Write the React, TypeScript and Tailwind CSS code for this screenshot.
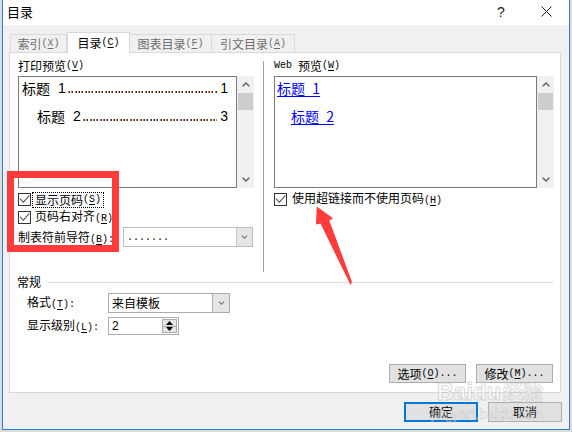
import React from "react";

const Acc = ({ k, tail = "" }: { k: string; tail?: string }) => (
  <span className="font-['Liberation_Mono',monospace] text-[10px]">
    (<span className="underline underline-offset-2">{k}</span>){tail}
  </span>
);

const Check = () => (
  <span className="flex h-[13px] w-[13px] shrink-0 items-center justify-center border border-[#333333] bg-white">
    <svg width="11" height="11" viewBox="0 0 11 11">
      <path d="M1 4.7 L4.3 8.3 L10.3 1.3" fill="none" stroke="#5f5f5f" strokeWidth="1.2" />
    </svg>
  </span>
);

const Chevron = ({ up = false, color = "#606060", w = 8, h = 5 }: { up?: boolean; color?: string; w?: number; h?: number }) => (
  <svg width={w} height={h} viewBox="0 0 8 5">
    <path d={up ? "M0.7 4.3 L4 1 L7.3 4.3" : "M0.7 0.7 L4 4 L7.3 0.7"} fill="none" stroke={color} strokeWidth="1.4" />
  </svg>
);

const ScrollBar = () => (
  <div className="flex w-[17px] flex-col bg-[#f0f0f0]">
    <div className="flex h-[17px] items-center justify-center">
      <Chevron up />
    </div>
    <div className="mx-[1px] h-[17px] bg-[#cdcdcd]" />
    <div className="flex-1" />
    <div className="flex h-[17px] items-center justify-center">
      <Chevron />
    </div>
  </div>
);

const Leader = () => (
  <span className="mb-[3px] ml-[2px] mr-[3px] h-[2px] flex-1 self-end bg-[repeating-linear-gradient(90deg,#c97a2b_0px,#c97a2b_1px,#23306a_1px,#23306a_2px,transparent_2px,transparent_3.33px)]" />
);

const Btn = ({ children, className = "" }: { children: React.ReactNode; className?: string }) => (
  <div className={`flex h-[19px] w-[77px] items-center justify-center border border-[#adadad] bg-[#e1e1e1] ${className}`}>
    {children}
  </div>
);

export default function App() {
  return (
    <div className="relative h-[432px] w-[572px] overflow-hidden bg-[#dcdcdc] pl-[2px] font-['Noto_Sans_CJK_SC','Noto_Sans',sans-serif] text-[12px] leading-[14px] text-black">
      <div className="flex h-[430px] w-[568px] flex-col border-x border-b border-[#2a80d8] bg-[#f0f0f0]">
        {/* title bar */}
        <div className="flex h-[25px] shrink-0 items-center bg-white pb-[2px]">
          <span className="pl-[4px] text-[13px] leading-[15px]">目录</span>
          <span className="ml-auto mr-[36px] w-[8px] text-center font-['Liberation_Sans',sans-serif] text-[14px] leading-[16px] text-[#222]">
            ?
          </span>
          <span className="mr-[17px] flex w-[11px]">
            <svg width="11" height="11" viewBox="0 0 11 11">
              <path d="M0.5 0.5 L10.5 10.5 M10.5 0.5 L0.5 10.5" stroke="#222" strokeWidth="1" fill="none" />
            </svg>
          </span>
        </div>

        {/* body */}
        <div className="flex flex-col px-[6px] pt-[7px]">
          {/* tabs */}
          <div className="flex h-[20px] items-end pl-[1px]">
            <div className="flex h-[18px] w-[57px] items-center justify-center border-x border-t border-[#d9d9d9] bg-[#f0f0f0] text-[#6d6d6d]">
              索引<Acc k="X" />
            </div>
            <div className="relative z-10 -mb-px flex h-[21px] w-[63px] items-center justify-center border-x border-t border-[#d9d9d9] bg-white pb-[1px]">
              目录<Acc k="C" />
            </div>
            <div className="flex h-[18px] w-[82px] items-center justify-center border-r border-t border-[#d9d9d9] bg-[#f0f0f0] text-[#6d6d6d]">
              图表目录<Acc k="F" />
            </div>
            <div className="flex h-[18px] w-[83px] items-center justify-center border-r border-t border-[#d9d9d9] bg-[#f0f0f0] text-[#6d6d6d]">
              引文目录<Acc k="A" />
            </div>
          </div>

          {/* panel */}
          <div className="flex h-[341px] w-[552px] flex-col border border-[#d9d9d9] bg-white">
            <div className="flex h-[219px] shrink-0 pl-[8px] pt-[6px]">
              {/* left column */}
              <div className="flex w-[236px] flex-col">
                <div className="flex h-[14px] items-center">
                  打印预览<Acc k="V" />
                </div>
                <div className="mt-[3px] flex h-[112px]">
                  <div className="flex w-[219px] flex-col border border-[#7a7a7a] bg-white pl-[3px] pr-[8px] pt-[3px] text-[14px] leading-[16px]">
                    <div className="flex h-[16px]">
                      <span>标题</span>
                      <span className="ml-[8px] font-['Liberation_Sans',sans-serif]">1</span>
                      <Leader />
                      <span className="font-['Liberation_Sans',sans-serif]">1</span>
                    </div>
                    <div className="mt-[12px] flex h-[16px] pl-[15px]">
                      <span>标题</span>
                      <span className="ml-[8px] font-['Liberation_Sans',sans-serif]">2</span>
                      <Leader />
                      <span className="font-['Liberation_Sans',sans-serif]">3</span>
                    </div>
                  </div>
                  <ScrollBar />
                </div>
                <div className="mt-[5px] flex h-[13px] items-center">
                  <Check />
                  <span className="ml-[1px] flex h-[16px] items-center border border-dotted border-black px-[2px]">
                    显示页码<Acc k="S" />
                  </span>
                </div>
                <div className="mt-[5px] flex h-[13px] items-center">
                  <Check />
                  <span className="ml-[4px]">
                    页码右对齐<Acc k="R" />
                  </span>
                </div>
                <div className="mt-[3px] flex h-[20px] items-center">
                  <span className="w-[105px] pt-[2px]">
                    制表符前导符<Acc k="B" tail=":" />
                  </span>
                  <div className="flex h-[20px] w-[130px] border border-[#bcbcbc] bg-white">
                    <span className="flex-1 pl-[3px] pt-[2px] font-['Liberation_Mono',monospace] text-[10px] leading-[16px]">.......</span>
                    <span className="flex w-[16px] items-center justify-center border-l border-[#c8c8c8] bg-[#e5e5e5]">
                      <Chevron color="#7a7a7a" w={7} h={4} />
                    </span>
                  </div>
                </div>
              </div>

              {/* separator */}
              <div className="ml-[9px] mt-[2px] w-px bg-[#a0a0a0]" />

              {/* right column */}
              <div className="ml-[10px] flex w-[280px] flex-col">
                <div className="flex h-[14px] items-center">
                  <span className="font-['Liberation_Mono',monospace] text-[10px] whitespace-pre">Web </span>
                  预览<Acc k="W" />
                </div>
                <div className="mt-[3px] flex h-[112px]">
                  <div className="flex w-[263px] flex-col border border-[#7a7a7a] bg-white pl-[2px] pt-[3px] text-[14px] leading-[16px] text-[#0000ff]">
                    <div className="h-[16px]">
                      <span className="underline underline-offset-2 [word-spacing:4px]">标题 1</span>
                    </div>
                    <div className="mt-[12px] h-[16px] pl-[14px]">
                      <span className="underline underline-offset-2 [word-spacing:4px]">标题 2</span>
                    </div>
                  </div>
                  <ScrollBar />
                </div>
                <div className="mt-[5px] flex h-[13px] items-center">
                  <Check />
                  <span className="ml-[5px]">
                    使用超链接而不使用页码<Acc k="H" />
                  </span>
                </div>
              </div>
            </div>

            {/* 常规 group */}
            <div className="mt-[3px] flex h-[14px] items-center pl-[7px] pr-[7px]">
              <span>常规</span>
              <div className="ml-[7px] h-px flex-1 bg-[#dcdcdc]" />
            </div>
            <div className="mt-[4px] flex h-[20px] items-center pl-[17px]">
              <span className="w-[81px]">
                格式<Acc k="T" tail=":" />
              </span>
              <div className="flex h-[20px] w-[122px] border border-[#acacac] bg-white">
                <span className="flex-1 pl-[3px] leading-[18px]">来自模板</span>
                <span className="flex w-[17px] items-center justify-center border-l border-[#acacac] bg-[#e5e5e5]">
                  <Chevron color="#7a7a7a" w={7} h={4} />
                </span>
              </div>
            </div>
            <div className="mt-[4px] flex h-[18px] items-center pl-[17px]">
              <span className="w-[81px]">
                显示级别<Acc k="L" tail=":" />
              </span>
              <div className="flex h-[18px] w-[71px] border border-[#acacac] bg-white p-[1px]">
                <span className="flex-1 pl-[2px] font-['Liberation_Sans',sans-serif] text-[12px] leading-[14px]">2</span>
                <div className="flex w-[15px] flex-col">
                  <span className="flex flex-1 items-center justify-center border border-[#acacac] bg-[#e5e5e5]">
                    <svg width="7" height="4" viewBox="0 0 7 4">
                      <path d="M0 4 L3.5 0 L7 4 Z" fill="#000" />
                    </svg>
                  </span>
                  <span className="flex flex-1 items-center justify-center border-x border-b border-[#acacac] bg-[#e5e5e5]">
                    <svg width="7" height="4" viewBox="0 0 7 4">
                      <path d="M0 0 L3.5 4 L7 0 Z" fill="#000" />
                    </svg>
                  </span>
                </div>
              </div>
            </div>
            <div className="mt-[29px] flex justify-end gap-[10px] pr-[7px]">
              <Btn>
                选项<Acc k="O" tail="..." />
              </Btn>
              <Btn>
                修改<Acc k="M" tail="..." />
              </Btn>
            </div>
          </div>

          {/* bottom buttons */}
          <div className="mt-[9px] flex justify-end gap-[10px] pr-[1px]">
            <div className="flex h-[20px] w-[74px] items-center justify-center border-2 border-[#0078d7] bg-[#e1e1e1]">确定</div>
            <div className="flex h-[20px] w-[74px] items-center justify-center border border-[#adadad] bg-[#e1e1e1]">取消</div>
          </div>
        </div>
      </div>

      {/* watermark */}
      <div className="pointer-events-none absolute left-[437px] top-[380px] flex items-end opacity-60">
        <span className="font-['Liberation_Sans',sans-serif] text-[23px] font-bold leading-[24px] text-white [-webkit-text-stroke:1px_#c4c4c4]">
          Baidu
        </span>
        <span className="ml-[2px] text-[20px] font-bold leading-[24px] text-white [-webkit-text-stroke:1px_#c4c4c4]">经验</span>
      </div>
      <div className="pointer-events-none absolute left-[431px] top-[406px] font-['Liberation_Sans',sans-serif] text-[14px] leading-[16px] text-white opacity-50 [-webkit-text-stroke:0.5px_#b0b0b0]">
        jingyan.baidu.com
      </div>

      {/* red annotation box */}
      <div className="pointer-events-none absolute left-[7px] top-[171px] h-[81px] w-[112px] border-[7px] border-[#ff3b3b]" />

      {/* red arrow */}
      <svg className="pointer-events-none absolute left-0 top-0" width="572" height="432" viewBox="0 0 572 432">
        <polygon points="316.7,206.5 333,218.3 329.3,220.5 352,282 350.5,285 320.5,223.5 316,224.5" fill="#ff3b3b" />
      </svg>
    </div>
  );
}
